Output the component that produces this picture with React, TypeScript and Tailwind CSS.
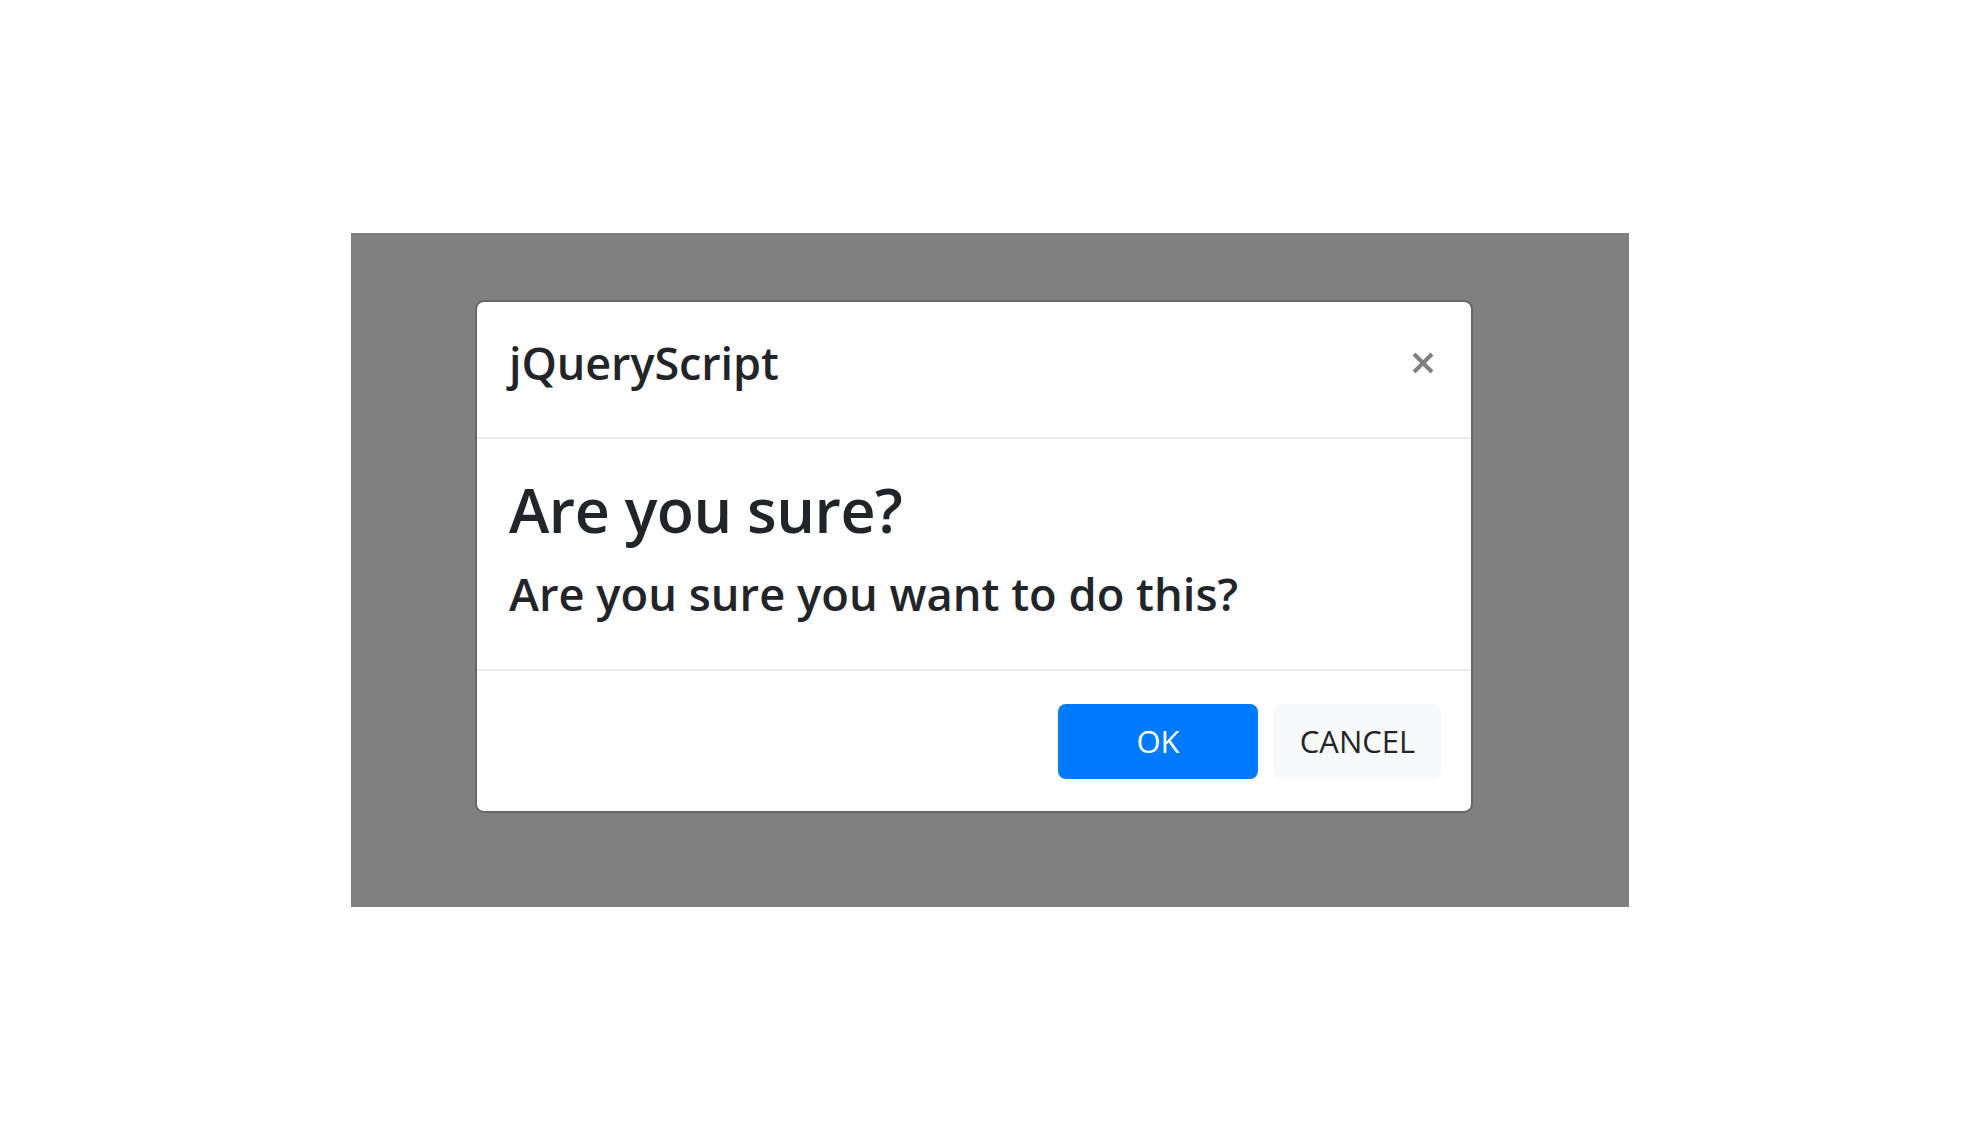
import React from "react";

const font = { fontFamily: '"Open Sans", "Noto Sans", Arial, sans-serif' };

function CloseIcon() {
  return (
    <svg width="22" height="22" viewBox="0 0 22 22" className="block">
      <path d="M2 2 L20 20 M20 2 L2 20" stroke="#808080" strokeWidth="4" strokeLinecap="butt" />
    </svg>
  );
}

export default function App() {
  return (
    <div className="w-full h-screen bg-white flex items-center justify-center" style={font}>
      <div className="w-[1278px] h-[674px] bg-[#808080] pt-[67px] pl-[124px]">
        <div className="w-[998px] bg-white border-2 border-[#666666] rounded-[9px] flex flex-col text-[#212529]">
          {/* header */}
          <div className="flex items-center justify-between px-[32px] h-[137px] border-b-2 border-[#e9ecef]">
            <h5 className="text-[45px] leading-[70px] font-semibold tracking-[-0.1px] mb-[14px]">jQueryScript</h5>
            <button className="mr-[5px] mt-[-14px]">
              <CloseIcon />
            </button>
          </div>

          {/* body */}
          <div className="px-[32px] pt-[32px] pb-[32px] h-[232px] border-b-2 border-[#e9ecef]">
            <h2 className="text-[61px] leading-[77px] font-semibold mb-[12px] tracking-[-0.5px]">Are you sure?</h2>
            <p className="text-[45.3px] leading-[68px] font-semibold">Are you sure you want to do this?</p>
          </div>

          {/* footer */}
          <div className="flex justify-end items-center gap-[16px] px-[30px] pt-[33px] pb-[32px]">
            <button className="w-[200px] h-[75px] rounded-[8px] bg-[#007bff] text-white text-[31px]">OK</button>
            <button className="w-[167px] h-[75px] rounded-[8px] bg-[#f8f9fa] text-[#212529] text-[31px]">CANCEL</button>
          </div>
        </div>
      </div>
    </div>
  );
}
